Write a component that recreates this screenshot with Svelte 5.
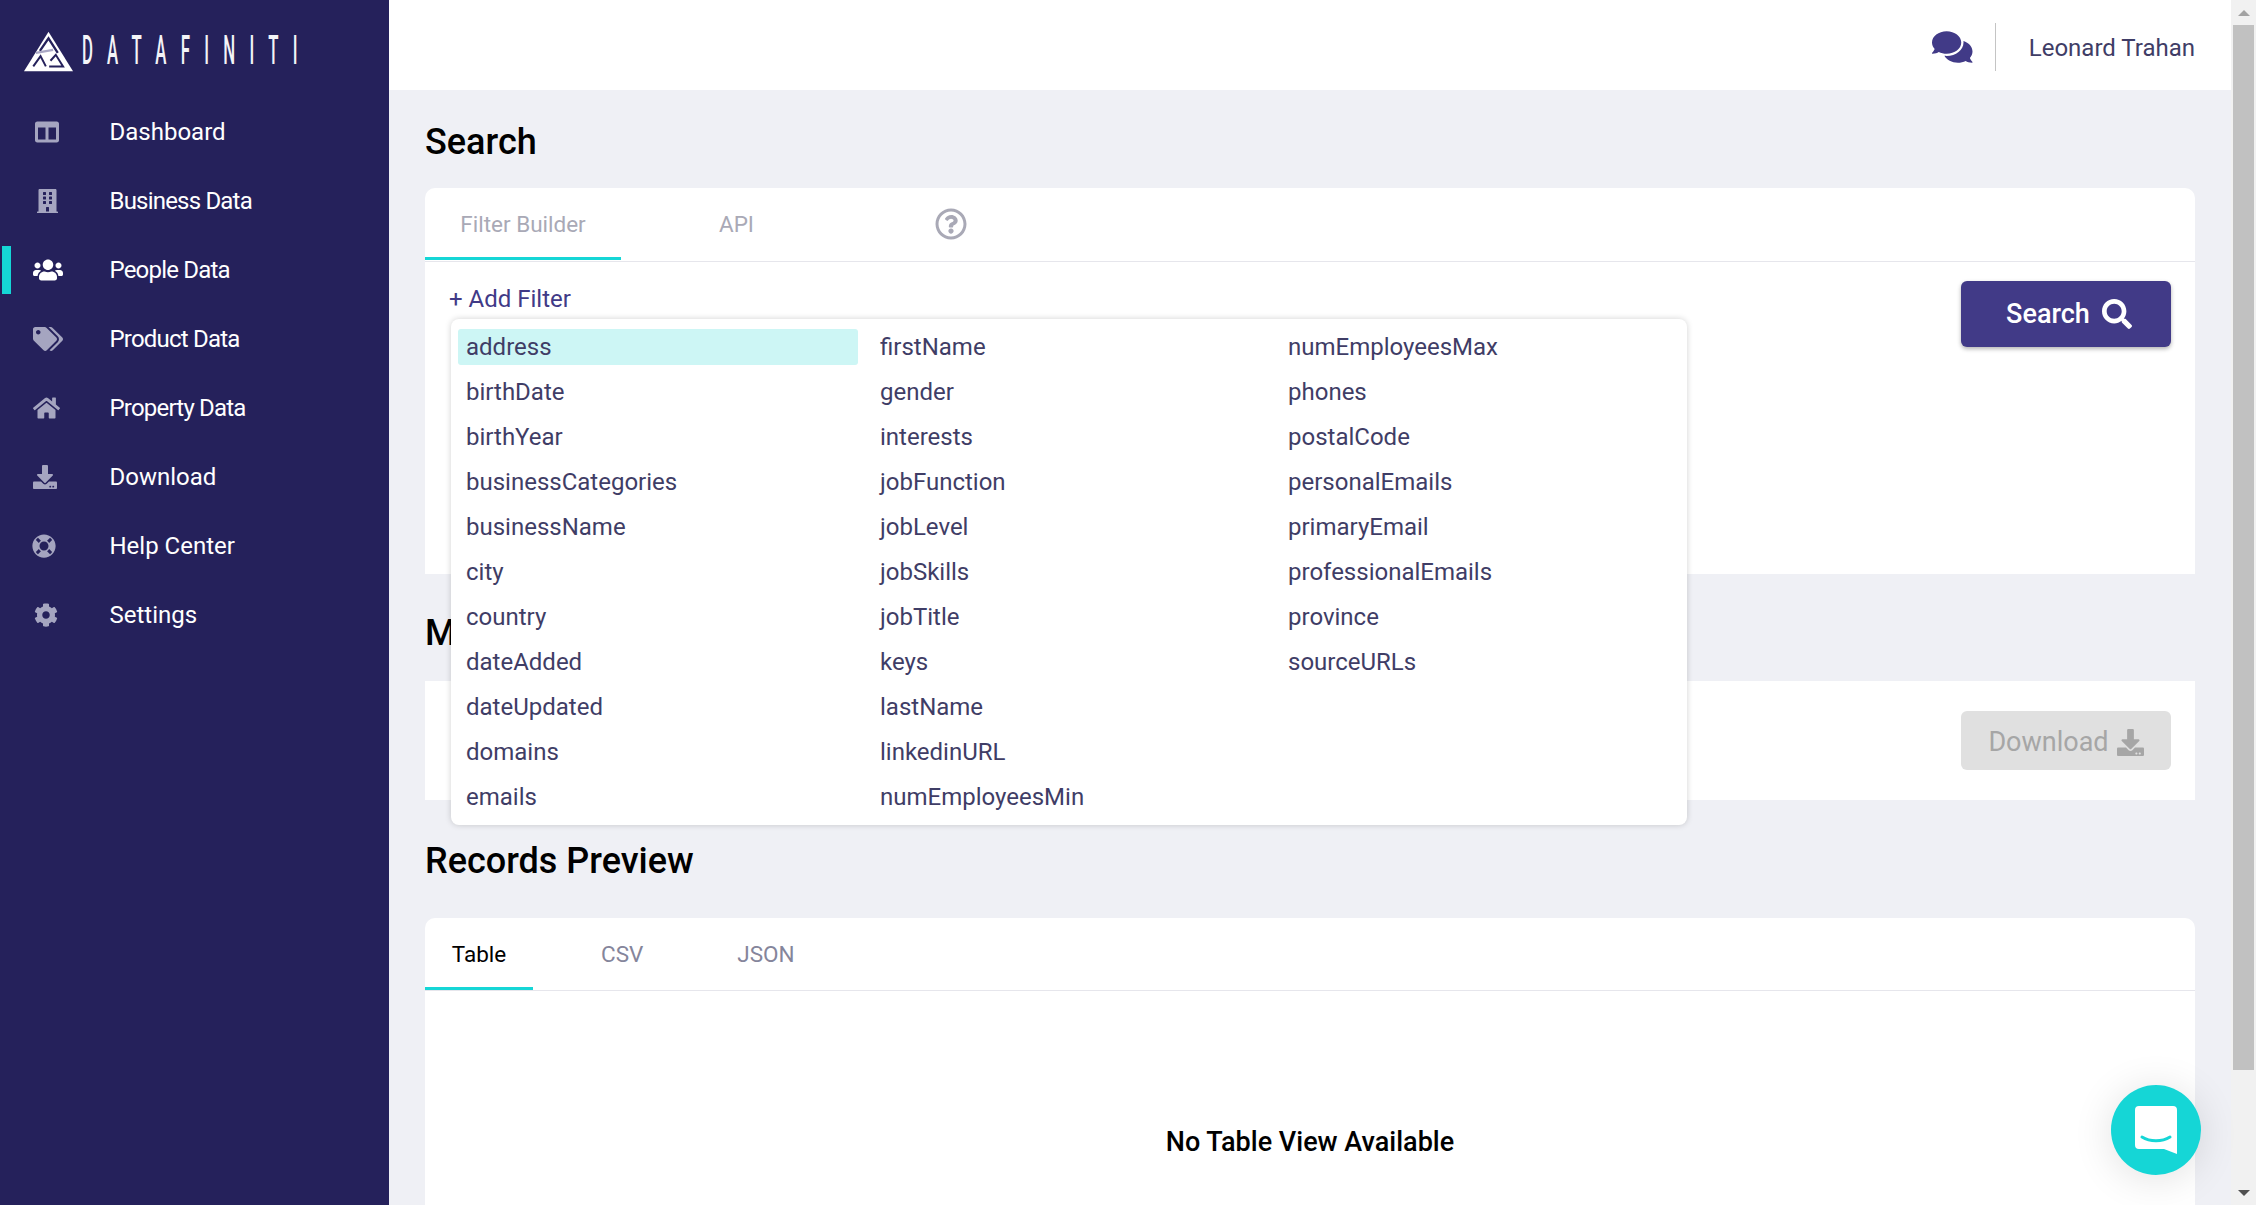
<script>
    const icons = {
        columns: { w: 512, d: 'M464 32H48C21.49 32 0 53.49 0 80v352c0 26.51 21.49 48 48 48h416c26.51 0 48-21.49 48-48V80c0-26.51-21.49-48-48-48zM224 416H64V160h160v256zm224 0H288V160h160v256z' },
        building: { w: 448, d: 'M436 480h-20V24c0-13.255-10.745-24-24-24H56C42.745 0 32 10.745 32 24v456H12c-6.627 0-12 5.373-12 12v20h448v-20c0-6.627-5.373-12-12-12zM128 76c0-6.627 5.373-12 12-12h40c6.627 0 12 5.373 12 12v40c0 6.627-5.373 12-12 12h-40c-6.627 0-12-5.373-12-12V76zm0 96c0-6.627 5.373-12 12-12h40c6.627 0 12 5.373 12 12v40c0 6.627-5.373 12-12 12h-40c-6.627 0-12-5.373-12-12v-40zm52 148h-40c-6.627 0-12-5.373-12-12v-40c0-6.627 5.373-12 12-12h40c6.627 0 12 5.373 12 12v40c0 6.627-5.373 12-12 12zm76 160h-64v-84c0-6.627 5.373-12 12-12h40c6.627 0 12 5.373 12 12v84zm64-172c0 6.627-5.373 12-12 12h-40c-6.627 0-12-5.373-12-12v-40c0-6.627 5.373-12 12-12h40c6.627 0 12 5.373 12 12v40zm0-96c0 6.627-5.373 12-12 12h-40c-6.627 0-12-5.373-12-12v-40c0-6.627 5.373-12 12-12h40c6.627 0 12 5.373 12 12v40zm0-96c0 6.627-5.373 12-12 12h-40c-6.627 0-12-5.373-12-12V76c0-6.627 5.373-12 12-12h40c6.627 0 12 5.373 12 12v40z' },
        users: { w: 640, d: 'M96 224c35.3 0 64-28.7 64-64s-28.7-64-64-64-64 28.7-64 64 28.7 64 64 64zm448 0c35.3 0 64-28.7 64-64s-28.7-64-64-64-64 28.7-64 64 28.7 64 64 64zm32 32h-64c-17.6 0-33.5 7.1-45.1 18.6 40.3 22.1 68.9 62 75.1 109.4h66c17.7 0 32-14.3 32-32v-32c0-35.3-28.7-64-64-64zm-256 0c61.9 0 112-50.1 112-112S381.9 32 320 32 208 82.1 208 144s50.1 112 112 112zm76.8 32h-8.3c-20.8 10-43.9 16-68.5 16s-47.6-6-68.5-16h-8.3C179.6 288 128 339.6 128 403.2V432c0 26.5 21.5 48 48 48h288c26.5 0 48-21.5 48-48v-28.8c0-63.6-51.6-115.2-115.2-115.2zm-223.7-13.4C161.5 263.1 145.6 256 128 256H64c-35.3 0-64 28.7-64 64v32c0 17.7 14.3 32 32 32h65.9c6.3-47.4 34.9-87.3 75.2-109.4z' },
        tags: { w: 640, d: 'M497.941 225.941L286.059 14.059A48 48 0 0 0 252.118 0H48C21.49 0 0 21.49 0 48v204.118a48 48 0 0 0 14.059 33.941l211.882 211.882c18.744 18.745 49.136 18.746 67.882 0l204.118-204.118c18.745-18.745 18.745-49.137 0-67.882zM112 160c-26.51 0-48-21.49-48-48s21.49-48 48-48 48 21.49 48 48-21.49 48-48 48zm513.941 133.823L421.823 497.941c-18.745 18.745-49.137 18.745-67.882 0l-.36-.36L527.64 323.522c16.999-16.999 26.36-39.6 26.36-63.64s-9.362-46.641-26.36-63.64L331.397 0h48.721a48 48 0 0 1 33.941 14.059l211.882 211.882c18.745 18.745 18.745 49.137 0 67.882z' },
        home: { w: 576, d: 'M280.37 148.26L96 300.11V464a16 16 0 0 0 16 16l112.06-.29a16 16 0 0 0 15.92-16V368a16 16 0 0 1 16-16h64a16 16 0 0 1 16 16v95.64a16 16 0 0 0 16 16.05L464 480a16 16 0 0 0 16-16V300L295.67 148.26a12.19 12.19 0 0 0-15.3 0zM571.6 251.47L488 182.56V44.05a12 12 0 0 0-12-12h-56a12 12 0 0 0-12 12v72.61L318.47 43a48 48 0 0 0-61 0L4.34 251.47a12 12 0 0 0-1.6 16.9l25.5 31A12 12 0 0 0 45.15 301l235.22-193.74a12.19 12.19 0 0 1 15.3 0L530.9 301a12 12 0 0 0 16.9-1.6l25.5-31a12 12 0 0 0-1.7-16.93z' },
        download: { w: 512, d: 'M216 0h80c13.3 0 24 10.7 24 24v168h87.7c17.8 0 26.7 21.5 14.1 34.1L269.7 378.3c-7.5 7.5-19.8 7.5-27.3 0L90.1 226.1c-12.6-12.6-3.7-34.1 14.1-34.1H192V24c0-13.3 10.7-24 24-24zm296 376v112c0 13.3-10.7 24-24 24H24c-13.3 0-24-10.7-24-24V376c0-13.3 10.7-24 24-24h146.7l49 49c20.1 20.1 52.5 20.1 72.6 0l49-49H488c13.3 0 24 10.7 24 24zm-124 88c0-11-9-20-20-20s-20 9-20 20 9 20 20 20 20-9 20-20zm64 0c0-11-9-20-20-20s-20 9-20 20 9 20 20 20 20-9 20-20z' },
        lifeRing: { w: 512, d: 'M256 8C119.033 8 8 119.033 8 256s111.033 248 248 248 248-111.033 248-248S392.967 8 256 8zm173.696 119.559l-63.399 63.399c-10.987-18.559-26.67-34.252-45.255-45.255l63.399-63.399a218.396 218.396 0 0 1 45.255 45.255zM256 352c-53.019 0-96-42.981-96-96s42.981-96 96-96 96 42.981 96 96-42.981 96-96 96zM127.559 82.304l63.399 63.399c-18.559 10.987-34.252 26.67-45.255 45.255l-63.399-63.399a218.372 218.372 0 0 1 45.255-45.255zM82.304 384.441l63.399-63.399c10.987 18.559 26.67 34.252 45.255 45.255l-63.399 63.399a218.396 218.396 0 0 1-45.255-45.255zm302.137 45.255l-63.399-63.399c18.559-10.987 34.252-26.67 45.255-45.255l63.399 63.399a218.429 218.429 0 0 1-45.255 45.255z' },
        cog: { w: 512, d: 'M487.4 315.7l-42.6-24.6c4.3-23.2 4.3-47 0-70.2l42.6-24.6c4.9-2.8 7.1-8.6 5.5-14-11.1-35.6-30-67.8-54.7-94.6-3.8-4.1-10-5.1-14.8-2.3L380.8 110c-17.9-15.4-38.5-27.3-60.8-35.1V25.8c0-5.6-3.9-10.5-9.4-11.7-36.7-8.2-74.3-7.8-109.2 0-5.5 1.2-9.4 6.1-9.4 11.7V75c-22.2 7.9-42.8 19.8-60.8 35.1L88.7 85.5c-4.9-2.8-11-1.9-14.8 2.3-24.7 26.7-43.6 58.9-54.7 94.6-1.7 5.4.6 11.2 5.5 14L67.3 221c-4.3 23.2-4.3 47 0 70.2l-42.6 24.6c-4.9 2.8-7.1 8.6-5.5 14 11.1 35.6 30 67.8 54.7 94.6 3.8 4.1 10 5.1 14.8 2.3l42.6-24.6c17.9 15.4 38.5 27.3 60.8 35.1v49.2c0 5.6 3.9 10.5 9.4 11.7 36.7 8.2 74.3 7.8 109.2 0 5.5-1.2 9.4-6.1 9.4-11.7v-49.2c22.2-7.9 42.8-19.8 60.8-35.1l42.6 24.6c4.9 2.8 11 1.9 14.8-2.3 24.7-26.7 43.6-58.9 54.7-94.6 1.5-5.5-.7-11.3-5.6-14.1zM256 336c-44.1 0-80-35.9-80-80s35.9-80 80-80 80 35.9 80 80-35.9 80-80 80z' },
        search: { w: 512, d: 'M505 442.7L405.3 343c-4.5-4.5-10.6-7-17-7H372c27.6-35.3 44-79.7 44-128C416 93.1 322.9 0 208 0S0 93.1 0 208s93.1 208 208 208c48.3 0 92.7-16.4 128-44v16.3c0 6.4 2.5 12.5 7 17l99.7 99.7c9.4 9.4 24.6 9.4 33.9 0l28.3-28.3c9.4-9.4 9.4-24.6.1-34zM208 336c-70.7 0-128-57.2-128-128 0-70.7 57.2-128 128-128 70.7 0 128 57.2 128 128 0 70.7-57.2 128-128 128z' },
        comments: { w: 576, d: 'M416 192c0-88.4-93.1-160-208-160S0 103.6 0 192c0 34.3 14.1 65.9 38 92-13.4 30.2-35.5 54.2-35.8 54.5-2.2 2.3-2.8 5.7-1.5 8.7S4.8 352 8 352c36.6 0 66.9-12.3 88.7-25 32.2 15.7 70.3 25 111.3 25 114.9 0 208-71.6 208-160zm122 220c23.9-26 38-57.7 38-92 0-66.9-53.5-124.2-129.3-148.1.9 6.6 1.3 13.3 1.3 20.1 0 105.9-107.7 192-240 192-10.8 0-21.3-.8-31.7-1.9C207.8 439.6 281.8 480 368 480c41 0 79.1-9.2 111.3-25 21.8 12.7 52.1 25 88.7 25 3.2 0 6.1-1.9 7.3-4.8 1.3-2.9.7-6.3-1.5-8.7-.3-.3-22.4-24.2-35.8-54.5z' },
        help: { w: 512, d: 'M256 8C119.043 8 8 119.083 8 256c0 136.997 111.043 248 248 248s248-111.003 248-248C504 119.083 392.957 8 256 8zm0 448c-110.532 0-200-89.431-200-200 0-110.495 89.472-200 200-200 110.491 0 200 89.471 200 200 0 110.53-89.431 200-200 200zm107.244-255.2c0 67.052-72.421 68.084-72.421 92.863V300c0 6.627-5.373 12-12 12h-45.647c-6.627 0-12-5.373-12-12v-8.659c0-35.745 27.1-50.034 47.579-61.516 17.561-9.845 28.324-16.541 28.324-29.579 0-17.246-21.999-28.693-39.784-28.693-23.189 0-33.894 10.977-48.942 29.969-4.057 5.12-11.46 6.071-16.666 2.124l-27.824-21.098c-5.107-3.872-6.251-11.066-2.644-16.363C184.846 131.491 214.94 112 261.794 112c49.071 0 101.45 38.304 101.45 88.8zM298 368c0 23.159-18.841 42-42 42s-42-18.841-42-42 18.841-42 42-42 42 18.841 42 42z' }
    };

    // x = left edge of each glyph in the sidebar, they are not centred on one axis
    const navItems = [
        { label: 'Dashboard', icon: 'columns', x: 35 },
        { label: 'Business Data', icon: 'building', x: 37 },
        { label: 'People Data', icon: 'users', x: 33, active: true },
        { label: 'Product Data', icon: 'tags', x: 33 },
        { label: 'Property Data', icon: 'home', x: 33 },
        { label: 'Download', icon: 'download', x: 33 },
        { label: 'Help Center', icon: 'lifeRing', x: 32 },
        { label: 'Settings', icon: 'cog', x: 34 }
    ];

    const filterColumns = [
        ['address', 'birthDate', 'birthYear', 'businessCategories', 'businessName', 'city', 'country', 'dateAdded', 'dateUpdated', 'domains', 'emails'],
        ['firstName', 'gender', 'interests', 'jobFunction', 'jobLevel', 'jobSkills', 'jobTitle', 'keys', 'lastName', 'linkedinURL', 'numEmployeesMin'],
        ['numEmployeesMax', 'phones', 'postalCode', 'personalEmails', 'primaryEmail', 'professionalEmails', 'province', 'sourceURLs']
    ];
</script>

{#snippet icon(name, cls)}
    <svg class={cls} viewBox="0 0 {icons[name].w} 512" aria-hidden="true"><path fill="currentColor" d={icons[name].d} /></svg>
{/snippet}

<div class="layout">
    <aside class="sidebar">
        <div class="logo">
            <svg class="logo-mark" viewBox="72 92 148 120" aria-hidden="true">
                <path fill="#fff" d="M146 92 L220 212 H72 Z" />
                <g fill="none" stroke-linejoin="miter">
                    <path stroke="#25215b" stroke-width="7" d="M120 150 L146 112 L174 156" />
                    <path stroke="#a9a7c4" stroke-width="7" d="M108 156 L160 147" />
                    <path stroke="#25215b" stroke-width="6" d="M100 197 L122 166 L138 197" />
                    <path stroke="#25215b" stroke-width="6" d="M148 197 H190 L168 162 L152 180" />
                </g>
            </svg>
            <span class="logo-text">DATAFINITI</span>
        </div>
        <nav>
            {#each navItems as item}
                <a class="nav-item" class:active={item.active} href="#top">
                    <span class="nav-icon" style="padding-left: {item.x}px">{@render icon(item.icon, 'nav-svg')}</span>
                    <span class="nav-label" class:tight={item.label.endsWith('Data')}>{item.label}</span>
                </a>
            {/each}
        </nav>
    </aside>

    <div class="page">
        <header class="topbar">
            {@render icon('comments', 'chat-icon')}
            <span class="divider"></span>
            <span class="user">Leonard Trahan</span>
        </header>

        <main class="content">
            <h2 class="title first">Search</h2>
            <section class="card search-card">
                <div class="tabs">
                    <span class="tab active muted wide">Filter Builder</span>
                    <span class="tab muted api">API</span>
                    {@render icon('help', 'help-icon')}
                </div>
                <div class="search-body">
                    <div class="filter-area">
                        <span class="add-filter">+ Add Filter</span>
                        <div class="dropdown">
                            {#each filterColumns as col, c}
                                <ul class="filter-col">
                                    {#each col as name, i}
                                        <li class:highlighted={c === 0 && i === 0}>{name}</li>
                                    {/each}
                                </ul>
                            {/each}
                        </div>
                    </div>
                    <button class="btn primary" type="button">Search {@render icon('search', 'btn-icon')}</button>
                </div>
            </section>

            <h2 class="title second">Matching Records</h2>
            <section class="card download-card">
                <button class="btn disabled" type="button">Download {@render icon('download', 'btn-icon small')}</button>
            </section>

            <h2 class="title third">Records Preview</h2>
            <section class="card preview-card">
                <div class="tabs">
                    <span class="tab active dark">Table</span>
                    <span class="tab csv">CSV</span>
                    <span class="tab json">JSON</span>
                </div>
                <p class="empty">No Table View Available</p>
            </section>
        </main>
    </div>

    <div class="scrollbar">
        <span class="arrow up"></span>
        <span class="thumb"></span>
        <span class="arrow down"></span>
    </div>

    <button class="chat-launcher" type="button" aria-label="Open chat">
        <svg viewBox="0 0 42 48" width="42" height="48" aria-hidden="true">
            <path fill="#fff" d="M4 0h34a4 4 0 0 1 4 4v44l-13-5H4a4 4 0 0 1-4-4V4a4 4 0 0 1 4-4z" />
            <path fill="none" stroke="#15d6d6" stroke-width="3" stroke-linecap="round" d="M7 31c8 5 20 5 28 0" />
        </svg>
    </button>
</div>

<style>
    :global(body) {
        margin: 0;
        font-family: Roboto, "Liberation Sans", sans-serif;
        overflow: hidden;
    }

    .layout {
        position: relative;
        display: flex;
        height: 100vh;
        overflow: hidden;
        background: #eff0f5;
    }

    .sidebar {
        flex: 0 0 389px;
        background: #25215b;
        overflow: hidden;
    }

    .logo {
        display: flex;
        align-items: center;
        gap: 9px;
        height: 42px;
        padding: 30px 0 0 24px;
    }

    .logo-mark {
        flex: none;
        width: 49px;
        height: 41px;
    }

    .logo-text {
        display: inline-block;
        color: #f4f4f8;
        font-size: 40px;
        font-weight: 500;
        line-height: 42px;
        letter-spacing: 34px;
        transform: scaleX(0.42);
        transform-origin: left center;
        white-space: nowrap;
    }

    nav {
        margin-top: 25px;
    }

    .nav-item {
        display: flex;
        align-items: center;
        height: 69px;
        color: #fff;
        font-size: 24px;
        text-decoration: none;
        position: relative;
    }

    .nav-item.active::before {
        content: '';
        position: absolute;
        left: 2px;
        top: 11px;
        width: 9px;
        height: 48px;
        background: #15d6d6;
    }

    .nav-icon {
        flex: 0 0 109.5px;
        box-sizing: border-box;
        color: #a5a5c0;
        display: flex;
    }

    .active .nav-icon {
        color: #fff;
    }

    .nav-svg {
        height: 24px;
        width: auto;
    }

    .nav-label.tight {
        letter-spacing: -0.8px;
    }

    .page {
        flex: 1;
        min-width: 0;
    }

    .topbar {
        display: flex;
        align-items: center;
        justify-content: flex-end;
        height: 90px;
        padding: 4px 36px 0 0;
        box-sizing: border-box;
        background: #fff;
    }

    .chat-icon {
        height: 36px;
        width: auto;
        color: #413a87;
    }

    .divider {
        width: 1px;
        height: 48px;
        margin: 0 33px 0 22px;
        background: #c4c4c4;
    }

    .user {
        padding-top: 2px;
        color: #3f3d66;
        font-size: 24px;
    }

    .content {
        padding: 0 36px;
    }

    .title {
        margin: 0;
        color: #000;
        font-size: 36px;
        font-weight: 500;
        line-height: 40px;
    }

    .title.first {
        padding: 32px 0 26px;
    }

    .title.second {
        padding: 39px 0 28px;
    }

    .title.third {
        padding: 41px 0 37px;
    }

    .card {
        background: #fff;
        border-radius: 10px 10px 0 0;
    }

    .search-card {
        height: 386px;
    }

    .tabs {
        display: flex;
        align-items: center;
        height: 74px;
        box-sizing: border-box;
        border-bottom: 1px solid #e6e6ec;
    }

    .preview-card .tabs {
        height: 73px;
    }

    .tab {
        position: relative;
        display: flex;
        align-items: center;
        justify-content: center;
        height: 100%;
        color: #85859b;
        font-size: 22.5px;
    }

    .search-card .tab {
        box-sizing: border-box;
        padding-bottom: 2px;
    }

    .tab.muted {
        color: #a9a9b6;
    }

    .tab.dark {
        color: #000;
    }

    .tab.active::after {
        content: '';
        position: absolute;
        left: 0;
        right: 0;
        bottom: 0;
        height: 3px;
        background: #15d6d6;
    }

    .search-card .tab.active::after {
        bottom: 1px;
    }

    .wide {
        width: 196px;
    }

    .api {
        margin-left: 98px;
    }

    .help-icon {
        height: 32px;
        width: 32px;
        margin: 0 0 2px 181px;
        color: #a9a9b6;
    }

    .search-body {
        display: flex;
        justify-content: space-between;
        padding: 19px 24px 0;
    }

    .filter-area {
        position: relative;
    }

    .add-filter {
        display: block;
        padding-top: 2px;
        color: #413a87;
        font-size: 24px;
        line-height: 32px;
    }

    .dropdown {
        position: absolute;
        top: 38px;
        left: 2px;
        z-index: 5;
        display: flex;
        width: 1236px;
        height: 506px;
        padding: 10px 7px 0;
        box-sizing: border-box;
        background: #fff;
        border-radius: 8px;
        box-shadow: 0 0 6px rgba(0, 0, 0, 0.18);
    }

    .filter-col {
        flex: none;
        margin: 0;
        padding: 0;
        list-style: none;
        width: 414px;
    }

    .filter-col:nth-child(2) {
        width: 408px;
    }

    .filter-col li {
        height: 36px;
        margin-bottom: 9px;
        padding-left: 8px;
        box-sizing: border-box;
        color: #3f3d66;
        font-size: 24px;
        line-height: 36px;
        border-radius: 3px;
    }

    .filter-col li.highlighted {
        width: 400px;
        background: #cdf6f5;
    }

    .btn {
        display: inline-flex;
        align-items: center;
        justify-content: center;
        gap: 12px;
        width: 210px;
        border: none;
        border-radius: 6px;
        font-family: inherit;
        font-size: 27px;
    }

    .primary {
        height: 66px;
        padding: 0 0 0 6px;
        background: #413a87;
        color: #fff;
        font-weight: 500;
        box-shadow: 0 2px 4px rgba(0, 0, 0, 0.3);
    }

    .disabled {
        height: 59px;
        gap: 8px;
        padding: 3px 0 0;
        background: #e0e0e0;
        color: #a6a6a6;
    }

    .btn-icon {
        height: 30px;
        width: 30px;
    }

    .btn-icon.small {
        height: 27px;
        width: 27px;
    }

    .download-card {
        display: flex;
        align-items: flex-start;
        justify-content: flex-end;
        height: 119px;
        padding: 30px 24px 0;
        box-sizing: border-box;
        border-radius: 0;
    }

    .preview-card {
        height: 400px;
    }

    .preview-card .tab.dark {
        width: 108px;
    }

    .csv {
        margin-left: 68px;
    }

    .json {
        margin-left: 94px;
    }

    .empty {
        margin: 135px 0 0;
        color: #000;
        font-size: 27px;
        font-weight: 500;
        text-align: center;
    }

    .scrollbar {
        position: relative;
        flex: 0 0 25px;
        background: #f1f1f1;
    }

    .thumb {
        position: absolute;
        left: 2px;
        top: 25px;
        width: 21px;
        height: 1045px;
        background: #c1c1c1;
    }

    .arrow {
        position: absolute;
        left: 7px;
        width: 0;
        height: 0;
        border-left: 6px solid transparent;
        border-right: 6px solid transparent;
    }

    .up {
        top: 10px;
        border-bottom: 6px solid #a3a3a3;
    }

    .down {
        bottom: 9px;
        border-top: 6px solid #505050;
    }

    .chat-launcher {
        position: absolute;
        left: 2111px;
        top: 1085px;
        display: flex;
        align-items: center;
        justify-content: center;
        width: 90px;
        height: 90px;
        padding: 0;
        border: none;
        border-radius: 50%;
        background: #15d6d6;
        box-shadow: 0 4px 40px rgba(0, 0, 0, 0.12);
    }
</style>
